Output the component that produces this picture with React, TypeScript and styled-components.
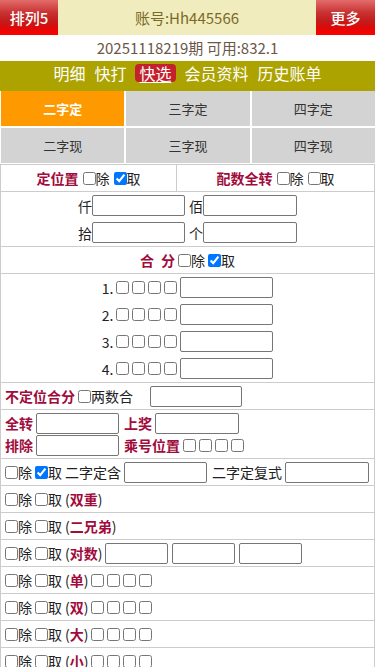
import React from 'react';
import styled, { createGlobalStyle } from 'styled-components';

const GlobalStyle = createGlobalStyle`
  body {
    margin: 0;
    background: #fff;
    color: #222;
    font-family: "Noto Sans CJK SC", "Noto Sans", sans-serif;
    font-size: 14px;
  }
`;

const TopBar = styled.header`
  display: flex;
  height: 35px;
`;

const SideButton = styled.div<{ $width: number }>`
  flex-shrink: 0;
  width: ${p => p.$width}px;
  display: flex;
  align-items: center;
  justify-content: center;
  color: #fff;
  font-size: 15px;
  font-weight: 500;
  background: linear-gradient(#e46c6c 0%, #c93333 35%, #c21c1c 60%, #e00808 80%, #f00 100%);
`;

const Account = styled.div`
  flex: 1;
  display: flex;
  align-items: center;
  justify-content: center;
  background: #f1ecbe;
  color: #7a6a28;
  font-size: 15px;
`;

const Period = styled.div`
  height: 26px;
  line-height: 26px;
  text-align: center;
  color: #6b5848;
  font-size: 15px;
`;

const Nav = styled.nav`
  box-sizing: border-box;
  height: 30px;
  padding-top: 3px;
  display: flex;
  justify-content: center;
  align-items: flex-start;
  gap: 9px;
  background: #aca300;
`;

const NavItem = styled.span<{ $active?: boolean }>`
  padding: 0 ${p => (p.$active ? 4 : 0)}px;
  border-radius: 4px;
  line-height: 18px;
  font-size: 16px;
  color: #fff;
  background: ${p => (p.$active ? '#c4212e' : 'transparent')};
  text-decoration: ${p => (p.$active ? 'underline' : 'none')};
  text-underline-offset: 2px;
`;

const Tabs = styled.div`
  display: grid;
  grid-template-columns: repeat(3, 1fr);
  grid-auto-rows: 35px;
  gap: 2px;
  padding: 0 0 1px 1px;
`;

const Tab = styled.div<{ $active?: boolean }>`
  display: flex;
  align-items: center;
  justify-content: center;
  font-size: 13px;
  font-weight: ${p => (p.$active ? 700 : 400)};
  color: ${p => (p.$active ? '#fff' : '#333')};
  background: ${p => (p.$active ? '#ff9900' : '#d3d3d3')};
`;

const Form = styled.div`
  border: 1px solid #ccc;
  border-bottom: none;
`;

const Row = styled.div<{ $center?: boolean }>`
  box-sizing: border-box;
  min-height: 27px;
  padding: 0 4px;
  display: flex;
  align-items: center;
  justify-content: ${p => (p.$center ? 'center' : 'flex-start')};
  gap: 3px;
  border-bottom: 1px solid #ccc;
`;

const Block = styled.div<{ $pad?: number }>`
  padding: ${p => p.$pad ?? 0}px 4px;
  border-bottom: 1px solid #ccc;
`;

const Line = styled.div<{ $h: number; $center?: boolean; $gap?: number }>`
  height: ${p => p.$h}px;
  display: flex;
  align-items: center;
  justify-content: ${p => (p.$center ? 'center' : 'flex-start')};
  gap: ${p => p.$gap ?? 3}px;
`;

const Split = styled.div`
  display: grid;
  grid-template-columns: 176px 1fr;
  border-bottom: 1px solid #ccc;
`;

const Cell = styled.div<{ $divider?: boolean }>`
  height: 26px;
  display: flex;
  align-items: center;
  justify-content: center;
  gap: 4px;
  border-right: ${p => (p.$divider ? '1px solid #ccc' : 'none')};
`;

const Mark = styled.b`
  color: #a10c3c;
  font-weight: 700;
`;

const Text = styled.span<{ $ml?: number }>`
  line-height: 20px;
  white-space: nowrap;
  margin-left: ${p => p.$ml ?? 0}px;
`;

const Opt = styled.label`
  display: inline-flex;
  align-items: center;
  line-height: 20px;
  white-space: nowrap;
`;

const Check = styled.input.attrs({ type: 'checkbox' })`
  width: 13px;
  height: 13px;
  margin: 0;
  flex-shrink: 0;
`;

const Field = styled.input.attrs({ type: 'text' })<{ $w: number; $ml?: number }>`
  box-sizing: border-box;
  width: ${p => p.$w}px;
  height: 21px;
  margin: 0 0 0 ${p => p.$ml ?? 0}px;
  padding: 1px 2px;
  border: 1px solid #767676;
  border-radius: 2px;
  background: #fff;
  font-size: 13px;
  flex-shrink: 0;
`;

const Pair = styled.span`
  display: inline-flex;
  align-items: center;
`;

const Boxes = ({ n = 4 }: { n?: number }) => (
  <>
    {Array.from({ length: n }, (_, i) => (
      <Check key={i} />
    ))}
  </>
);

const Choice = ({ take = false }: { take?: boolean }) => (
  <>
    <Opt>
      <Check />除
    </Opt>
    <Opt>
      <Check defaultChecked={take} />取
    </Opt>
  </>
);

const tabs = ['二字定', '三字定', '四字定', '二字现', '三字现', '四字现'];
const navs = ['明细', '快打', '快选', '会员资料', '历史账单'];

const simpleRows: { mark: string; boxes?: boolean; fields?: number }[] = [
  { mark: '双重' },
  { mark: '二兄弟' },
  { mark: '对数', fields: 3 },
  { mark: '单', boxes: true },
  { mark: '双', boxes: true },
  { mark: '大', boxes: true },
  { mark: '小', boxes: true },
];

export default function App() {
  return (
    <>
      <GlobalStyle />
      <TopBar>
        <SideButton $width={58}>排列5</SideButton>
        <Account>账号:Hh445566</Account>
        <SideButton $width={59}>更多</SideButton>
      </TopBar>
      <Period>20251118219期 可用:832.1</Period>
      <Nav>
        {navs.map(n => (
          <NavItem key={n} $active={n === '快选'}>
            {n}
          </NavItem>
        ))}
      </Nav>
      <Tabs>
        {tabs.map((t, i) => (
          <Tab key={t} $active={i === 0}>
            {t}
          </Tab>
        ))}
      </Tabs>

      <Form>
        <Split>
          <Cell $divider>
            <Text><Mark>定位置</Mark></Text>
            <Choice take />
          </Cell>
          <Cell>
            <Text><Mark>配数全转</Mark></Text>
            <Choice />
          </Cell>
        </Split>

        <Block>
          <Line $h={27} $center $gap={4}>
            <Pair><Text>仟</Text><Field $w={93} /></Pair>
            <Pair><Text>佰</Text><Field $w={94} /></Pair>
          </Line>
          <Line $h={27} $center $gap={4}>
            <Pair><Text>拾</Text><Field $w={93} /></Pair>
            <Pair><Text>个</Text><Field $w={94} /></Pair>
          </Line>
        </Block>

        <Row $center>
          <Text><Mark>合{'\u2002'}分</Mark></Text>
          <Choice take />
        </Row>

        <Block>
          {[1, 2, 3, 4].map(n => (
            <Line key={n} $h={27} $center>
              <Text>{n}.</Text>
              <Boxes />
              <Field $w={93} />
            </Line>
          ))}
        </Block>

        <Row>
          <Text><Mark>不定位合分</Mark></Text>
          <Opt><Check />两数合</Opt>
          <Field $w={92} $ml={14} />
        </Row>

        <Block $pad={2}>
          <Line $h={22}>
            <Text><Mark>全转</Mark></Text>
            <Field $w={83} />
            <Text $ml={2}><Mark>上奖</Mark></Text>
            <Field $w={84} />
          </Line>
          <Line $h={22}>
            <Text><Mark>排除</Mark></Text>
            <Field $w={83} />
            <Text $ml={2}><Mark>乘号位置</Mark></Text>
            <Boxes />
          </Line>
        </Block>

        <Row>
          <Choice take />
          <Text>二字定含</Text>
          <Field $w={83} />
          <Text $ml={2}>二字定复式</Text>
          <Field $w={84} />
        </Row>

        {simpleRows.map(r => (
          <Row key={r.mark}>
            <Choice />
            <Text>
              (<Mark>{r.mark}</Mark>)
            </Text>
            {r.boxes && <Boxes />}
            {r.fields &&
              Array.from({ length: r.fields }, (_, i) => <Field key={i} $w={63} $ml={i ? 1 : 0} />)}
          </Row>
        ))}
      </Form>
    </>
  );
}
